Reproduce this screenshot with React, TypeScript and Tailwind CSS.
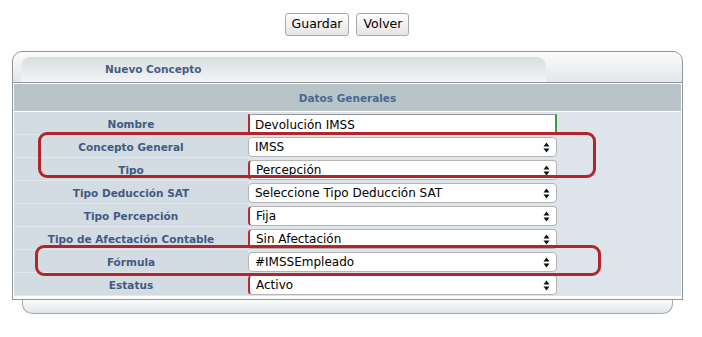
import React from 'react';

const font = { fontFamily: '"DejaVu Sans", Verdana, sans-serif' };

type Row = {
  label: string;
  value: string;
  kind: 'text' | 'select';
  required?: boolean;
};

const rows: Row[] = [
  { label: 'Nombre', value: 'Devolución IMSS', kind: 'text', required: true },
  { label: 'Concepto General', value: 'IMSS', kind: 'select' },
  { label: 'Tipo', value: 'Percepción', kind: 'select', required: true },
  { label: 'Tipo Deducción SAT', value: 'Seleccione Tipo Deducción SAT', kind: 'select' },
  { label: 'Tipo Percepción', value: 'Fija', kind: 'select', required: true },
  { label: 'Tipo de Afectación Contable', value: 'Sin Afectación', kind: 'select', required: true },
  { label: 'Fórmula', value: '#IMSSEmpleado', kind: 'select' },
  { label: 'Estatus', value: 'Activo', kind: 'select', required: true },
];

const Arrows = () => (
  <svg width="7" height="11" viewBox="0 0 7 11" className="shrink-0">
    <path d="M3.5 0.5 L6.5 4.5 L0.5 4.5 Z" fill="#111" />
    <path d="M0.5 6.5 L6.5 6.5 L3.5 10.5 Z" fill="#111" />
  </svg>
);

const Field = ({ row }: { row: Row }) => {
  if (row.kind === 'text') {
    return (
      <div className="w-[309px] h-[21px] bg-white border-t border-t-[#9a9a9a] border-b border-b-[#d0d0d0] border-l-2 border-l-[#c0282d] border-r-2 border-r-[#3d9a3d] flex items-center pl-[5px] pt-[1px] text-[12px] text-black">
        {row.value}
      </div>
    );
  }
  return (
    <div
      className={
        'w-[309px] h-[20px] bg-white rounded-[4px] border border-[#b4b4b4] flex items-center justify-between pl-[6px] pr-[6px] text-[12px] text-black ' +
        (row.required ? 'border-l-2 border-l-[#c0282d]' : '')
      }
    >
      <span>{row.value}</span>
      <Arrows />
    </div>
  );
};

export default function App() {
  return (
    <div className="w-[702px] h-[337px] bg-white" style={font}>
      <div className="flex justify-center gap-[7px] pt-[13px] pr-[8px]">
        <button className="h-[23px] px-[6px] rounded-[3px] border border-[#a8a8a8] bg-gradient-to-b from-white to-[#e4e4e4] text-[12.5px] text-black">
          Guardar
        </button>
        <button className="h-[23px] px-[6px] rounded-[3px] border border-[#a8a8a8] bg-gradient-to-b from-white to-[#e4e4e4] text-[12.5px] text-black">
          Volver
        </button>
      </div>

      <div className="relative ml-[12px] mt-[15px] w-[671px]">
        {/* header with tab */}
        <div className="h-[32px] rounded-t-[10px] border border-[#8f979c] bg-gradient-to-b from-[#fbfbfb] to-[#e3e7e9] pl-[8px] pt-[5px]">
          <div className="w-[525px] h-[25px] rounded-t-[9px] bg-gradient-to-b from-[#d9dee1] to-[#f3f4f5] flex items-center pl-[84px] text-[10.5px] font-bold text-[#435f86]">
            Nuevo Concepto
          </div>
        </div>

        {/* body */}
        <div className="border-x border-b border-[#8f979c] bg-white p-[1px] pb-[3px]">
          <div className="h-[27px] bg-[#b9c4c9] flex items-center justify-center pt-[2px] text-[10.5px] font-bold text-[#4a6890]">
            Datos Generales
          </div>
          <div className="mt-[1px] grid grid-cols-[234px_1fr] bg-[#dde4ec]">
            {rows.map((r) => (
              <React.Fragment key={r.label}>
                <div className="h-[23px] bg-[#d4dce3] border-b border-[#e3e8ed] flex items-center justify-center pt-[3px] text-[10.5px] font-bold text-[#3f5b81]">
                  {r.label}
                </div>
                <div className="h-[23px] flex items-center pt-[1px]">
                  <Field row={r} />
                </div>
              </React.Fragment>
            ))}
          </div>
        </div>

        {/* footer tab */}
        <div className="ml-[10px] w-[651px] h-[14px] rounded-b-[10px] border-x border-b border-[#a3aaae] bg-gradient-to-b from-[#fafafa] to-[#e2e6e9]" />

        {/* annotations */}
        <div className="absolute left-[26px] top-[81px] w-[558px] h-[46px] rounded-[9px] border-[3px] border-[#b0262a]" />
        <div className="absolute left-[23px] top-[194px] w-[566px] h-[31px] rounded-[9px] border-[3px] border-[#b0262a]" />
      </div>
    </div>
  );
}
